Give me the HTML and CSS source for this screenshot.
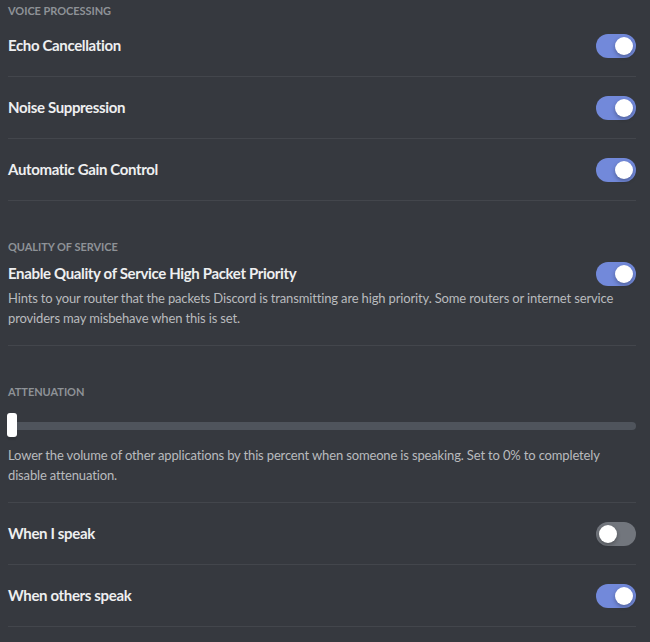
FILE: index.html
```html
<!DOCTYPE html>
<html>
<head>
<meta charset="utf-8">
<link rel="stylesheet" href="styles.css">
</head>
<body>
<div class="page">
  <section class="section first">
    <h5 class="header">Voice Processing</h5>
    <div class="item">
      <div class="row"><span class="title">Echo Cancellation</span><span class="switch on"><span class="knob"></span></span></div>
    </div>
    <div class="item">
      <div class="row"><span class="title">Noise Suppression</span><span class="switch on"><span class="knob"></span></span></div>
    </div>
    <div class="item">
      <div class="row"><span class="title">Automatic Gain Control</span><span class="switch on"><span class="knob"></span></span></div>
    </div>
  </section>
  <section class="section">
    <h5 class="header">Quality of Service</h5>
    <div class="item">
      <div class="row"><span class="title">Enable Quality of Service High Packet Priority</span><span class="switch on"><span class="knob"></span></span></div>
      <div class="desc">Hints to your router that the packets Discord is transmitting are high priority. Some routers or internet service providers may misbehave when this is set.</div>
    </div>
  </section>
  <section class="section">
    <h5 class="header">Attenuation</h5>
    <div class="item">
      <div class="slider"><div class="track"></div><div class="grabber"></div></div>
      <div class="desc slider-desc">Lower the volume of other applications by this percent when someone is speaking. Set to 0% to completely disable attenuation.</div>
    </div>
    <div class="item">
      <div class="row"><span class="title">When I speak</span><span class="switch"><span class="knob"></span></span></div>
    </div>
    <div class="item">
      <div class="row"><span class="title">When others speak</span><span class="switch on"><span class="knob"></span></span></div>
    </div>
  </section>
</div>
</body>
</html>
```
FILE: styles.css
```css
html, body {
  margin: 0;
  padding: 0;
  background: #36393f;
}
body {
  font-family: Lato, "Noto Sans", sans-serif;
  color: #dcddde;
}
.page {
  width: 628px;
  padding: 3px 0 0 8px;
}
.section {
  margin-top: 38px;
}
.section.first {
  margin-top: 0;
}
.header {
  margin: 0 0 7px 0;
  font-size: 11px;
  line-height: 16px;
  font-weight: 700;
  text-transform: uppercase;
  letter-spacing: -0.05px;
  color: #8e9297;
}
.first .header {
  margin-bottom: 15px;
}
.item {
  padding-bottom: 18px;
  border-bottom: 1px solid #43464c;
  margin-bottom: 19px;
}
.row {
  display: flex;
  align-items: center;
  justify-content: space-between;
  height: 24px;
}
.title {
  font-size: 15px;
  font-weight: 700;
  letter-spacing: -0.35px;
  color: #eeeff0;
  line-height: 20px;
  padding-bottom: 3px;
}
.switch {
  position: relative;
  width: 40px;
  height: 24px;
  border-radius: 12px;
  background: #72767d;
  flex-shrink: 0;
}
.switch.on {
  background: #7289da;
}
.knob {
  position: absolute;
  top: 3px;
  left: 3px;
  width: 18px;
  height: 18px;
  border-radius: 50%;
  background: #ffffff;
  box-shadow: 0 2px 4px rgba(0, 0, 0, 0.3);
}
.switch.on .knob {
  left: 19px;
}
.desc {
  margin-top: 2px;
  font-size: 13px;
  line-height: 20px;
  letter-spacing: -0.15px;
  color: #b9bbbe;
}
.item:has(.desc) {
  padding-bottom: 17px;
}
.slider {
  position: relative;
  height: 24px;
  margin-top: 13px;
}
.track {
  position: absolute;
  top: 9px;
  left: 0;
  right: 0;
  height: 8px;
  border-radius: 4px;
  background: #4f545c;
}
.grabber {
  position: absolute;
  top: 0;
  left: -1px;
  width: 10px;
  height: 24px;
  border-radius: 3px;
  background: #ffffff;
  box-shadow: 0 3px 1px rgba(0, 0, 0, 0.1);
}
.slider-desc {
  margin-top: 8px;
}
```
